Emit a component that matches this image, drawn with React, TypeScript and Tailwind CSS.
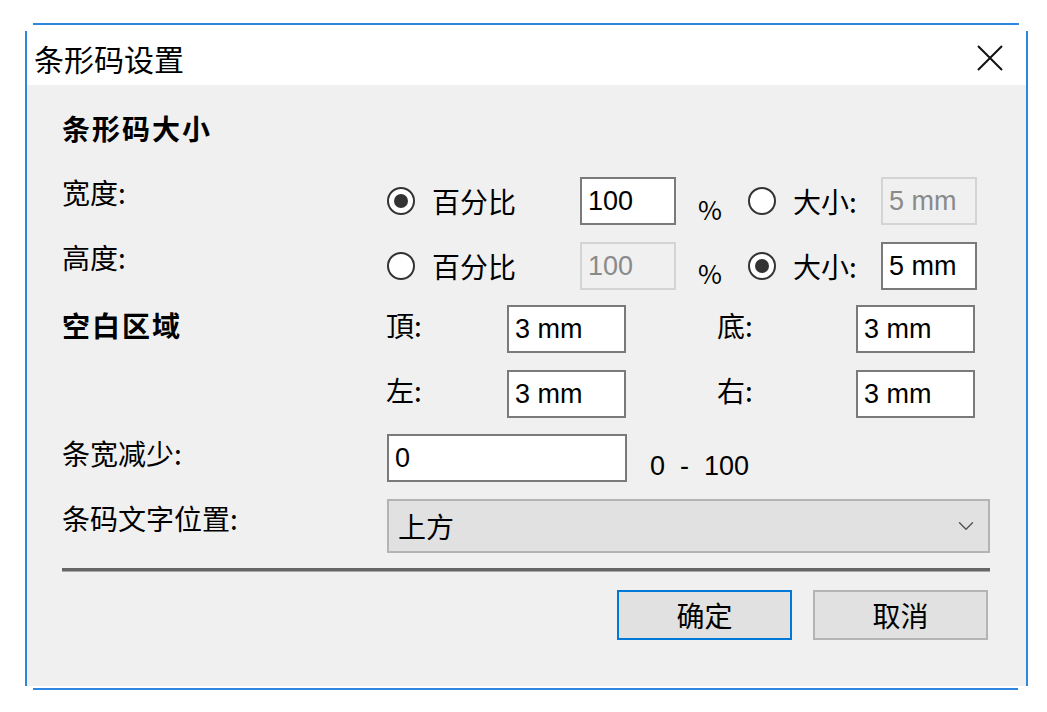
import { ChevronDown } from 'lucide-react';

const cjk = "font-['Noto_Sans_CJK_SC',sans-serif]";
const latin = "font-['Liberation_Sans','Noto_Sans_CJK_SC',sans-serif]";

function Radio({ checked }: { checked?: boolean }) {
  return (
    <span className="flex h-[28px] w-[28px] shrink-0 items-center justify-center rounded-full border-2 border-[#333333] bg-white">
      {checked && <span className="h-[14px] w-[14px] rounded-full bg-[#333333]" />}
    </span>
  );
}

function Field({ value, width, disabled }: { value: string; width: string; disabled?: boolean }) {
  return (
    <div
      className={`flex h-[48px] shrink-0 items-center px-[6px] text-[27px] ${latin} ${width} ${
        disabled
          ? 'border-2 border-[#d4d4d4] bg-[#f0f0f0] text-[#8a8a8a]'
          : 'border-2 border-[#7a7a7a] bg-white text-black'
      }`}
    >
      {value}
    </div>
  );
}

export default function App() {
  return (
    <div className={`h-[712px] w-[1047px] bg-white pl-[25px] pt-[23px] ${cjk}`}>
      <div className="w-[1003px]">
        <div className="ml-[8px] mr-[9px] h-[2px] bg-[#2e86de]" />
        <div className="mt-[6px] border-x-2 border-[#2e86de]">
          {/* title bar */}
          <div className="flex h-[54px] items-center justify-between bg-white pl-[7px] pr-[23px]">
            <span className="text-[30px] leading-none text-black">条形码设置</span>
            <svg width="26" height="26" viewBox="0 0 26 26" className="text-[#111]">
              <path d="M1 1 L25 25 M25 1 L1 25" stroke="currentColor" strokeWidth="2" />
            </svg>
          </div>

          {/* body */}
          <div className="h-[601px] bg-[#f0f0f0] pl-[35px] pr-[36px] pt-[26px] text-[28px] text-black">
            <div className="text-[28px] font-bold leading-[34px] tracking-[2px]">条形码大小</div>

            {/* width row */}
            <div className="mt-[32px] flex h-[48px] items-center">
              <div className="w-[325px] self-start leading-[30px]">宽度:</div>
              <div className="flex w-[193px] items-center">
                <Radio checked />
                <span className="ml-[17px] leading-[30px]">百分比</span>
              </div>
              <Field value="100" width="w-[96px]" />
              <div className="w-[72px] self-start pl-[22px] pt-[17px] text-[26px] leading-[30px]">%</div>
              <Radio />
              <span className="ml-[17px] w-[88px] leading-[30px]">大小:</span>
              <Field value="5 mm" width="w-[96px]" disabled />
            </div>

            {/* height row */}
            <div className="mt-[17px] flex h-[48px] items-center">
              <div className="w-[325px] self-start leading-[30px]">高度:</div>
              <div className="flex w-[193px] items-center">
                <Radio />
                <span className="ml-[17px] leading-[30px]">百分比</span>
              </div>
              <Field value="100" width="w-[96px]" disabled />
              <div className="w-[72px] self-start pl-[22px] pt-[16px] text-[26px] leading-[30px]">%</div>
              <Radio checked />
              <span className="ml-[17px] w-[88px] leading-[30px]">大小:</span>
              <Field value="5 mm" width="w-[96px]" />
            </div>

            {/* margins */}
            <div className="mt-[15px] flex h-[48px] items-start">
              <div className="mt-[5px] w-[324px] font-bold leading-[30px] tracking-[2px]">空白区域</div>
              <div className="mt-[5px] w-[121px] leading-[30px]">頂:</div>
              <Field value="3 mm" width="w-[119px]" />
              <div className="mt-[5px] w-[230px] pl-[91px] leading-[30px]">底:</div>
              <Field value="3 mm" width="w-[119px]" />
            </div>
            <div className="mt-[17px] flex h-[48px] items-start">
              <div className="w-[324px]" />
              <div className="mt-[5px] w-[121px] leading-[30px]">左:</div>
              <Field value="3 mm" width="w-[119px]" />
              <div className="mt-[5px] w-[230px] pl-[91px] leading-[30px]">右:</div>
              <Field value="3 mm" width="w-[119px]" />
            </div>

            {/* bar width reduction */}
            <div className="mt-[16px] flex h-[48px] items-start">
              <div className="mt-[4px] w-[325px] leading-[30px]">条宽减少:</div>
              <Field value="0" width="w-[240px]" />
              <div className={`ml-[23px] mt-[17px] text-[27px] leading-[30px] ${latin}`}>0&nbsp; -&nbsp; 100</div>
            </div>

            {/* text position */}
            <div className="mt-[17px] flex h-[54px] items-start">
              <div className="mt-[4px] w-[325px] leading-[30px]">条码文字位置:</div>
              <div className="flex h-[54px] flex-1 items-center justify-between border-2 border-[#b4b4b4] bg-[#e1e1e1] pl-[9px] pr-[9px]">
                <span className="leading-[30px]">上方</span>
                <ChevronDown className="h-[26px] w-[26px] text-[#555]" strokeWidth={1.3} />
              </div>
            </div>

            {/* separator */}
            <div className="mt-[15px] h-[3px] bg-[#666666]" />
            <div className="h-[1px] bg-[#a9a9a9]" />

            {/* buttons */}
            <div className="mt-[18px] flex justify-end gap-[21px] pr-[2px]">
              <button className="flex h-[50px] w-[175px] items-center justify-center border-2 border-[#0078d7] bg-[#e1e1e1] text-[28px] leading-none">
                确定
              </button>
              <button className="flex h-[50px] w-[175px] items-center justify-center border-2 border-[#b4b4b4] bg-[#e1e1e1] text-[28px] leading-none">
                取消
              </button>
            </div>
          </div>
        </div>
        <div className="ml-[8px] mr-[10px] mt-[2px] h-[2px] bg-[#2e86de]" />
      </div>
    </div>
  );
}
